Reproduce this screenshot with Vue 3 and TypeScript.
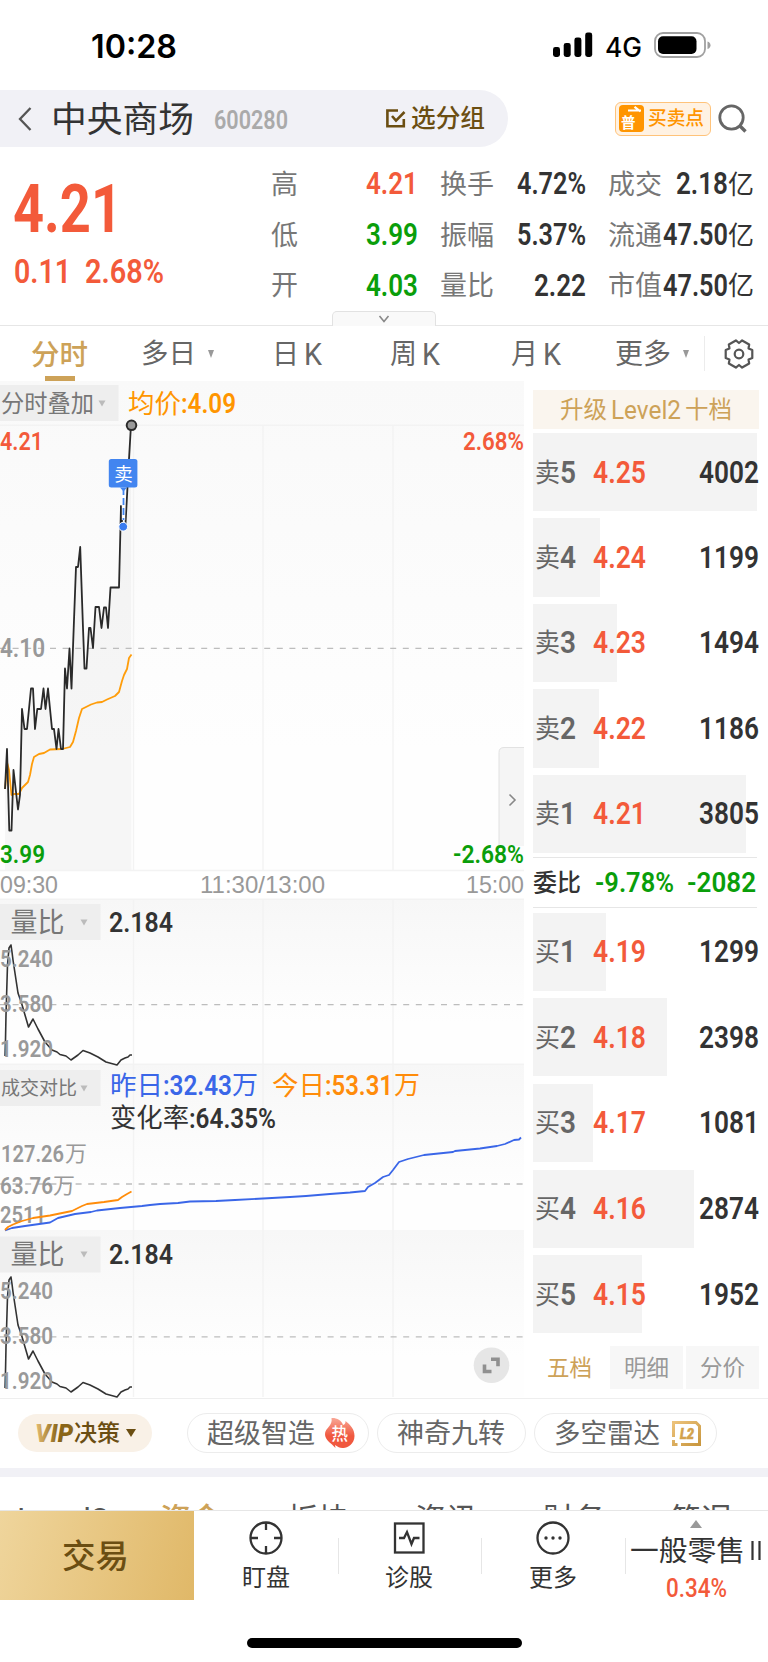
<script setup lang="ts">
import { h } from 'vue'

interface TextProps { t: string; w: number; s: number }

// Single line of text condensed or expanded to an exact advance width.
const T = (p: TextProps) =>
  h('svg', { class: 't', width: p.w, height: Math.round(p.s * 1.2) },
    h('text', {
      x: 0,
      y: Math.round(p.s * 1.2) / 2 + p.s * 0.36,
      'font-size': p.s,
      textLength: p.w,
      lengthAdjust: 'spacingAndGlyphs',
      fill: 'currentColor',
    }, p.t))
T.props = ['t', 'w', 's']

interface Stat { label: string; lw: number; value: string; vw: number; unit?: string; tone: string }
const stats: Stat[][] = [
  [
    { label: '高', lw: 27, value: '4.21', vw: 52, tone: 'red' },
    { label: '换手', lw: 54, value: '4.72%', vw: 69, tone: 'dark' },
    { label: '成交', lw: 54, value: '2.18', vw: 52, unit: '亿', tone: 'dark' },
  ],
  [
    { label: '低', lw: 27, value: '3.99', vw: 52, tone: 'green' },
    { label: '振幅', lw: 54, value: '5.37%', vw: 69, tone: 'dark' },
    { label: '流通', lw: 54, value: '47.50', vw: 65, unit: '亿', tone: 'dark' },
  ],
  [
    { label: '开', lw: 27, value: '4.03', vw: 52, tone: 'green' },
    { label: '量比', lw: 54, value: '2.22', vw: 52, tone: 'dark' },
    { label: '市值', lw: 54, value: '47.50', vw: 65, unit: '亿', tone: 'dark' },
  ],
]

interface Level { side: string; n: string; price: string; qty: string; bar: number }
const sells: Level[] = [
  { side: '卖', n: '5', price: '4.25', qty: '4002', bar: 224 },
  { side: '卖', n: '4', price: '4.24', qty: '1199', bar: 67 },
  { side: '卖', n: '3', price: '4.23', qty: '1494', bar: 84 },
  { side: '卖', n: '2', price: '4.22', qty: '1186', bar: 66 },
  { side: '卖', n: '1', price: '4.21', qty: '3805', bar: 213 },
]
const buys: Level[] = [
  { side: '买', n: '1', price: '4.19', qty: '1299', bar: 73 },
  { side: '买', n: '2', price: '4.18', qty: '2398', bar: 134 },
  { side: '买', n: '3', price: '4.17', qty: '1081', bar: 60 },
  { side: '买', n: '4', price: '4.16', qty: '2874', bar: 161 },
  { side: '买', n: '5', price: '4.15', qty: '1952', bar: 109 },
]

interface Label { t: string; x: number; y: number; w: number; s: number; c: string; b?: number; f?: string }
const labels: Label[] = [
  { t: '4.10', x: 0, y: 647.5, w: 45, s: 26, c: '#999', b: 600 },
  { t: '4.21', x: 0, y: 440.3, w: 43, s: 26.5, c: '#f35a3a', b: 600 },
  { t: '3.99', x: 0, y: 853, w: 45, s: 26.5, c: '#0a9e0a', b: 600 },
  { t: '2.68%', x: 463, y: 440.3, w: 61, s: 26.5, c: '#f35a3a', b: 600 },
  { t: '-2.68%', x: 453, y: 853, w: 71, s: 26.5, c: '#0a9e0a', b: 600 },
  { t: '09:30', x: 0, y: 884.5, w: 58, s: 24, c: '#999', f: 'ax' },
  { t: '11:30/13:00', x: 200, y: 884.5, w: 125, s: 24, c: '#999', f: 'ax' },
  { t: '15:00', x: 466, y: 884.5, w: 58, s: 24, c: '#999', f: 'ax' },
  { t: '分时叠加', x: 1, y: 404, w: 93, s: 23.5, c: '#777' },
  { t: '均价', x: 128, y: 403, w: 53, s: 26.5, c: '#ff9500' },
  { t: ':4.09', x: 181, y: 402.5, w: 55, s: 28, c: '#ff9500', b: 600 },
  { t: '成交对比', x: 1, y: 1088.5, w: 76, s: 19, c: '#777' },
  { t: '昨日', x: 110, y: 1085, w: 53, s: 26.5, c: '#3a66e8' },
  { t: ':32.43', x: 163, y: 1084.5, w: 69, s: 28, c: '#3a66e8', b: 600 },
  { t: '万', x: 232, y: 1085, w: 26, s: 26, c: '#3a66e8' },
  { t: '今日', x: 272, y: 1085, w: 53, s: 26.5, c: '#ff8c0a' },
  { t: ':53.31', x: 325, y: 1084.5, w: 68, s: 28, c: '#ff8c0a', b: 600 },
  { t: '万', x: 394, y: 1085, w: 26, s: 26, c: '#ff8c0a' },
  { t: '变化率', x: 110, y: 1117.5, w: 79, s: 26.5, c: '#333' },
  { t: ':64.35%', x: 189, y: 1117.5, w: 87, s: 28, c: '#333', b: 600 },
  { t: '127.26', x: 1, y: 1153, w: 63, s: 24.5, c: '#999', b: 600 },
  { t: '万', x: 65, y: 1153, w: 22, s: 22, c: '#999' },
  { t: '63.76', x: 0, y: 1185, w: 53, s: 24.5, c: '#999', b: 600 },
  { t: '万', x: 53, y: 1185, w: 22, s: 22, c: '#999' },
  { t: '2511', x: 0, y: 1214.5, w: 46, s: 24.5, c: '#999', b: 600 },
  ...[0, 332].flatMap((d): Label[] => [
    { t: '量比', x: 10.5, y: 922.5 + d, w: 54, s: 27, c: '#777' },
    { t: '2.184', x: 109, y: 921.5 + d, w: 64, s: 28, c: '#333', b: 600 },
    { t: '5.240', x: 0, y: 958.5 + d, w: 53, s: 24.5, c: '#999', b: 600 },
    { t: '3.580', x: 0, y: 1003.5 + d, w: 53, s: 24.5, c: '#999', b: 600 },
    { t: '1.920', x: 0, y: 1048.5 + d, w: 53, s: 24.5, c: '#999', b: 600 },
  ]),
]

const price = '5,789 7,749 9.3,830.5 11.5,830.5 13.5,770 18,809.5 20,795 22,709 24.5,729 27,729 31,688.5 33,688.5 35,729 37.3,709 41,709 43.5,688.5 45.5,709 48,688.5 52,729 54,729 56.5,749 58.5,729 61,749 63,749 65,668.5 67,688.5 69.5,648.5 71.5,688.5 74,620 76,567 78,567 80.2,547 83,628 84.5,668.5 86.5,668.5 89,628 90.5,628 93,648 95.5,607 99,607 101.5,628 104,607.5 106,607.5 108,628 110.5,587.5 119,587.5 121,506 122,524 125.5,524 127.5,487 129,459 131,425'
const average = '5,789 7.5,764 9,770 11.5,795 14,794 19,794 22,788 28,782 30,775 32,764 34,757 39,754 44,753 50,749.5 62,749 70,747 73,742 76,731 79,718 82,709 86,707 91,704.5 97,702.5 102,702 107,699.5 115,696 119,692 122,681 124,675 127,669 129,658 131.5,654.5'
const ratio = '5,1056 5.5,1040 6,1015 7.5,965 9,948 11,945 12,952 13,960 18,993 21.5,1003 28.5,1027 33,1019 38,1029 45,1042 52,1050 57,1052 60,1054.5 66,1056 71,1060 78,1055 83,1050.5 90,1053 98,1057 106,1062 117,1065 121,1060 125,1058 128,1057 130,1055 132,1055'
const yesterday = '5,1230.5 12,1228 25,1226 50,1222.5 58,1218 75,1214 91,1212 97,1210.5 120,1208 142,1206 150,1205 160,1204 178,1203 190,1201.5 216,1201 235,1200 263,1198.5 290,1197 306,1196 330,1194 350,1192.5 365,1191 368,1187 375,1183 383,1177 389,1175 393,1170 399,1162 408,1159 424,1155 453,1152 455,1151 480,1148.5 497,1146 505,1144 514,1140 519,1139.5 521,1137.5'
const today = '5,1230 8,1227 13,1224.5 22,1221 33,1218 50,1215.5 72,1211 82,1206 87,1204 104,1202 118,1200 122,1197 127,1194 131.5,1191.5'
const gridX = [133.5, 263, 393]
const arrows = [[102, 403.5], [84, 922.5], [84, 1088.5], [84, 1254.5]]

// Six-toothed cog outline centred on (15, 15).
const cog = [0, 60, 120, 180, 240, 300]
  .flatMap((a) => [[a - 17, 13.9], [a + 17, 13.9], [a + 30, 11]])
  .map(([a, r]) => `${(15 + r * Math.cos((a * Math.PI) / 180)).toFixed(2)},${(15 + r * Math.sin((a * Math.PI) / 180)).toFixed(2)}`)
  .join(' ')
</script>

<template>
  <div class="page">
    <header class="status">
      <T class="clock" t="10:28" :w="86" :s="33" />
      <svg class="signal" width="40" height="26">
        <rect x="0" y="15" width="7" height="10" rx="2.4" /><rect x="10.7" y="11" width="7" height="14" rx="2.4" />
        <rect x="21.4" y="5.5" width="7" height="19.5" rx="2.4" /><rect x="32.2" y="0.5" width="7" height="24.5" rx="2.4" />
      </svg>
      <T class="net" t="4G" :w="37" :s="26.5" />
      <svg class="battery" width="58" height="26">
        <rect x="1" y="1" width="50" height="24" rx="8" fill="none" stroke="#a0a0a0" stroke-width="1.8" />
        <rect x="4" y="4.3" width="38.5" height="17.6" rx="5" /><path d="M53.5 9.5q3 1 3 3.8t-3 3.8z" fill="#a0a0a0" />
      </svg>
    </header>

    <div class="titlebar">
      <div class="pill">
        <svg class="back" width="14" height="26"><path d="M12.5 2 2 13 12.5 24" fill="none" stroke="#555" stroke-width="2.3" /></svg>
        <T class="name" t="中央商场" :w="143" :s="35.5" />
        <T class="code" t="600280" :w="74" :s="25.5" />
        <svg class="check" width="20" height="19"><path d="M12 1.5H1.4v15.8h16.4V10M6 7l4 4.6L18.5 3" fill="none" stroke="#6b4e12" stroke-width="2.6" /></svg>
        <T class="group" t="选分组" :w="74" :s="24.5" />
      </div>
      <div class="trade-point">
        <svg width="25" height="27">
          <rect width="25" height="27" rx="4" fill="#ff9500" />
          <path d="M9 5.5H22M15.5 1.8 21.5 6.5" stroke="#fff" stroke-width="2.2" fill="none" />
          <text x="2" y="22.6" font-size="14.5" font-weight="700" fill="#fff">普</text>
        </svg>
        <T class="mid" t="买卖点" :w="56" :s="19" />
      </div>
      <svg class="search" width="30" height="30"><circle cx="13.5" cy="13.5" r="11.7" fill="none" stroke="#666" stroke-width="2.8" /><path d="m21.5 21.5 6 6" stroke="#666" stroke-width="3.4" /></svg>
    </div>

    <section class="quote">
      <div class="last">
        <T class="big" t="4.21" :w="109" :s="66" />
        <div class="change"><T t="0.11" :w="57" :s="33" /><T t="2.68%" :w="79" :s="33" /></div>
      </div>
      <div class="stats">
        <div v-for="(row, i) in stats" :key="i" class="stat-row">
          <div v-for="s in row" :key="s.label" class="stat">
            <T class="lab" :t="s.label" :w="s.lw" :s="27" />
            <div class="val" :class="s.tone">
              <T :t="s.value" :w="s.vw" :s="30.5" />
              <T v-if="s.unit" class="unit" :t="s.unit" :w="26" :s="26.5" />
            </div>
          </div>
        </div>
      </div>
      <div class="drawer"><svg width="12" height="8"><path d="m1.5 1 4.5 5.5L10.5 1" fill="none" stroke="#888" stroke-width="1.6" /></svg></div>
    </section>

    <nav class="tabs">
      <div class="tab on"><T t="分时" :w="57" :s="28.5" /></div>
      <div class="tab t2"><T t="多日" :w="55" :s="27.5" /><i class="tri"></i></div>
      <div class="tab t3"><T t="日" :w="27" :s="28" /><T t="K" :w="18" :s="31" /></div>
      <div class="tab t4"><T t="周" :w="27" :s="28" /><T t="K" :w="18" :s="31" /></div>
      <div class="tab t5"><T t="月" :w="27" :s="28" /><T t="K" :w="18" :s="31" /></div>
      <div class="tab t6"><T t="更多" :w="56" :s="28" /><i class="tri"></i></div>
      <div class="gear">
        <svg width="30" height="30" viewBox="0 0 30 30" fill="none" stroke="#555" stroke-width="2.2" stroke-linejoin="round">
          <polygon :points="cog" />
          <circle cx="15" cy="15" r="4.3" />
        </svg>
      </div>
    </nav>

    <main class="main">
      <svg class="chart" width="524" height="1017" viewBox="0 381 524 1017">
        <defs>
          <linearGradient id="fade" x1="0" y1="0" x2="0" y2="1"><stop offset="0" stop-color="#f7f7f7" /><stop offset="0.75" stop-color="#fefefe" /></linearGradient>
          <linearGradient id="fade2" x1="0" y1="0" x2="0" y2="1"><stop offset="0" stop-color="#f9f9f9" /><stop offset="0.75" stop-color="#fefefe" /></linearGradient>
        </defs>
        <rect x="0" y="381" width="524" height="489" fill="url(#fade2)" />
        <rect x="0" y="899" width="524" height="165" fill="url(#fade)" />
        <rect x="0" y="1064" width="524" height="166" fill="url(#fade)" />
        <rect x="0" y="1230" width="524" height="167" fill="url(#fade)" />
        <polygon :points="`5,870 ${price} 131.5,870`" fill="#000" fill-opacity="0.03" />
        <g stroke="#f3f3f3" stroke-width="1.4">
          <path d="M0 425.3H524M0 870.5H524M0 899.3H524M0 1064.3H524" />
          <path v-for="x in gridX" :key="x" :d="`M${x} 425V870M${x} 899V1397`" />
        </g>
        <g stroke="#bdbdbd" stroke-width="1.3" stroke-dasharray="6 6.6">
          <path d="M50 648.3H524" /><path d="M0 648.3H50" />
          <path d="M0 1004.6H524M0 1184H524M0 1336.8H524" />
        </g>
        <g fill="#eee">
          <rect x="0" y="385" width="118.5" height="36" /><rect x="0" y="904" width="100.5" height="36" />
          <rect x="0" y="1070" width="100.5" height="36" /><rect x="0" y="1236.5" width="100.5" height="36" />
        </g>
        <path v-for="a in arrows" :key="a[1]" :d="`M${a[0] - 3.5} ${a[1] - 3}h7l-3.5 6z`" fill="#bbb" />
        <path d="M524 747.5H504q-5 0-5 5V846h25z" fill="#f5f5f5" />
        <path d="M524 747.5H504q-5 0-5 5V846" fill="none" stroke="#e2e2e2" />
        <path d="m509.5 794.5 5.5 5.5-5.5 5.5" fill="none" stroke="#888" stroke-width="1.6" />
        <g fill="none" stroke-linejoin="round">
          <polyline :points="average" stroke="#ff9d0a" stroke-width="1.8" />
          <polyline :points="price" stroke="#2a2a2a" stroke-width="1.8" />
          <polyline :points="ratio" stroke="#333" stroke-width="1.6" />
          <polyline :points="ratio" stroke="#333" stroke-width="1.6" transform="translate(0 332)" />
        </g>
        <text v-for="(l, i) in labels" :key="i" :class="l.f" :x="l.x" :y="l.y + l.s * 0.36" :font-size="l.s" :font-weight="l.b || 400" :fill="l.c" :textLength="l.w" lengthAdjust="spacingAndGlyphs">{{ l.t }}</text>
        <g fill="none" stroke-linejoin="round" stroke-width="1.8">
          <polyline :points="yesterday" stroke="#3a66e8" />
          <polyline :points="today" stroke="#ff8c0a" />
        </g>
        <circle cx="131.5" cy="425.3" r="4.8" fill="#999" stroke="#2a2a2a" stroke-width="2" />
        <path d="M121.3 506V523" stroke="#222" stroke-width="2.2" />
        <path d="M123.5 488V520" stroke="#fff" stroke-width="3.4" />
        <path d="M123.5 488V520" stroke="#4285f0" stroke-width="1.8" stroke-dasharray="7 3" />
        <rect x="108.8" y="459" width="28.6" height="28.6" rx="2.5" fill="#4285f0" /><path d="M120 487.5h7l-3.5 4z" fill="#4285f0" />
        <text x="114.3" y="480.7" font-size="18.5" fill="#fff">卖</text>
        <circle cx="123.2" cy="526.7" r="4.4" fill="#3a7cf0" stroke="#fff" />
        <circle cx="491.5" cy="1365.3" r="17.8" fill="#e6e6e6" />
        <path d="M491 1359.2h7v7M491.5 1371.5h-7v-7" fill="none" stroke="#909090" stroke-width="3.6" />
      </svg>

      <aside class="book">
        <div class="banner"><T t="升级" :w="47" :s="23.5" /><T t="Level2" :w="70" :s="25" /><T t="十档" :w="47" :s="23.5" /></div>
        <div class="levels">
          <div v-for="l in sells" :key="l.n" class="level">
            <div class="bar" :style="{ width: l.bar + 'px' }"></div>
            <T class="side" :t="l.side" :w="25" :s="26" /><T class="num" :t="l.n" :w="16" :s="30.5" />
            <T class="price" :t="l.price" :w="53" :s="30.5" /><T class="qty" :t="l.qty" :w="60" :s="30.5" />
          </div>
        </div>
        <div class="ratio"><T class="rl" t="委比" :w="48" :s="24" /><T class="rg a" t="-9.78%" :w="79" :s="28" /><T class="rg b" t="-2082" :w="69" :s="28" /></div>
        <div class="levels lower">
          <div v-for="l in buys" :key="l.n" class="level">
            <div class="bar" :style="{ width: l.bar + 'px' }"></div>
            <T class="side" :t="l.side" :w="25" :s="26" /><T class="num" :t="l.n" :w="16" :s="30.5" />
            <T class="price" :t="l.price" :w="53" :s="30.5" /><T class="qty" :t="l.qty" :w="60" :s="30.5" />
          </div>
        </div>
        <div class="modes">
          <div class="mode active"><T t="五档" :w="45" :s="22.5" /></div>
          <div class="mode"><T t="明细" :w="45" :s="22.5" /></div>
          <div class="mode"><T t="分价" :w="45" :s="22.5" /></div>
        </div>
      </aside>
    </main>

    <div class="tools">
      <div class="vip">
        <svg width="39" height="24">
          <defs><linearGradient id="vip"><stop offset="0" stop-color="#e8bf74" /><stop offset="0.6" stop-color="#8a6518" /><stop offset="1" stop-color="#8a6518" /></linearGradient></defs>
          <text x="0" y="21" font-size="25.5" font-weight="900" font-style="italic" fill="url(#vip)" textLength="38" lengthAdjust="spacingAndGlyphs">VIP</text>
        </svg>
        <T class="mid" t="决策" :w="46" :s="23" /><i class="vtri"></i>
      </div>
      <div class="tool p1"><T t="超级智造" :w="108" :s="27" />
        <svg class="hot" width="32" height="32" viewBox="0 0 32 32">
          <defs><linearGradient id="hot" x1="0" y1="0" x2="0" y2="1"><stop offset="0" stop-color="#f9a796" /><stop offset="0.6" stop-color="#f0583f" /></linearGradient></defs>
          <path d="M7.5 1c5-.3 10 2 11.5 7 2-.5 2.500-2 2.500-4 5 4 9 8 9 15 0 8-7 12-11 12-4 .3-5-1-8.500-3l.5 3-4-4C3 24 1 20 1 17c0-6 8-8 6.500-16z" fill="url(#hot)" />
          <text x="7.500" y="23" font-size="16.500" font-weight="500" fill="#fff">热</text>
        </svg>
      </div>
      <div class="tool p2"><T t="神奇九转" :w="108" :s="27" /></div>
      <div class="tool p3"><T t="多空雷达" :w="106" :s="27" />
        <svg class="l2" width="29" height="25">
          <defs><linearGradient id="gold" x1="0" y1="0" x2="1" y2="1"><stop offset="0" stop-color="#ecc27a" /><stop offset="1" stop-color="#c9973f" /></linearGradient></defs>
          <path d="M1.500 16V1.500H24L27.500 5V23.500H9M1.500 19v4.500h4" fill="none" stroke="url(#gold)" stroke-width="3" />
          <text x="8" y="17.800" font-size="14.500" font-weight="900" font-style="italic" fill="#d3a24c" stroke="#d3a24c" stroke-width="0.500" textLength="14" lengthAdjust="spacingAndGlyphs">L2</text>
        </svg>
      </div>
    </div>
    <div class="band"></div>
    <nav class="subtabs">
      <T t="Level2" :w="92" :s="31" /><T class="gold" t="资金" :w="62" :s="31" /><T t="板块" :w="62" :s="31" />
      <T t="资讯" :w="62" :s="31" /><T t="财务" :w="62" :s="31" /><T t="简况" :w="62" :s="31" />
    </nav>

    <footer class="dock">
      <div class="deal"><T t="交易" :w="67" :s="33.500" /></div>
      <div class="item"><svg width="34" height="34" fill="none" stroke="#333" stroke-width="2.300"><circle cx="17" cy="17" r="15.500" /><path d="M17 2v7M17 25v7M2 17h7M25 17h7" /></svg><T t="盯盘" :w="48" :s="24" /></div>
      <div class="item line"><svg width="34" height="34" fill="none" stroke="#333" stroke-width="2.300"><rect x="3" y="2.500" width="28.500" height="29" /><path d="M7 17h5l3-6 4.500 12 2.500-6h5.500" /></svg><T t="诊股" :w="48" :s="24" /></div>
      <div class="item line"><svg width="34" height="34" fill="none" stroke="#333" stroke-width="2.300"><circle cx="17" cy="17" r="15.500" /><g fill="#333" stroke="none"><circle cx="10" cy="17" r="1.700" /><circle cx="17" cy="17" r="1.700" /><circle cx="24" cy="17" r="1.700" /></g></svg><T t="更多" :w="48" :s="24" /></div>
      <div class="sector line"><i class="up"></i>
        <div class="sector-name"><T t="一般零售" :w="115" :s="28.500" /><svg width="14" height="30"><path d="M3.500 5V24M10.500 5V24" stroke="#333" stroke-width="2.200" /></svg></div>
        <T class="red" t="0.34%" :w="61" :s="25" />
      </div>
    </footer>
    <div class="home"><i></i></div>
  </div>
</template>

<style>
body { background: #fff; }
</style>

<style scoped>
.page { width: 768px; height: 1662px; overflow: hidden; background: #fff; font-family: Roboto, "Noto Sans CJK SC", sans-serif; color: #333; }
.t { display: block; flex: none; overflow: visible; }
svg { display: block; flex: none; }
.mid { font-weight: 500; }
.status { height: 90px; display: flex; align-items: center; box-sizing: border-box; padding-left: 91px; }
.clock { font-family: Inter, sans-serif; font-weight: 600; color: #000; margin-top: 2px; }
.signal { margin-left: 376px; }
.net { margin-left: 12px; font-family: Inter, sans-serif; font-weight: 500; color: #000; margin-top: 4px; }
.battery { margin-left: 12px; }
.titlebar { height: 57px; display: flex; align-items: center; }
.pill { width: 507.5px; height: 57px; background: #f1f1f6; border-radius: 0 29px 29px 0; display: flex; align-items: center; }
.back { margin-left: 18px; }
.name { margin-left: 19px; margin-top: 1px; }
.code { margin-left: 20px; margin-top: 1px; color: #aaa; font-weight: 600; }
.check { margin-left: 98px; }
.group { margin-left: 5px; color: #6b4e12; font-weight: 500; }
.trade-point { margin-left: 107.5px; width: 95.5px; height: 34px; box-sizing: border-box; border: 1.5px solid #ffc37a; border-radius: 6px; background: #fff2e3; display: flex; align-items: center; gap: 4px; padding-left: 2.5px; color: #ff9500; }
.search { margin-left: 7px; }
.quote { height: 179px; display: grid; grid-template-columns: 271px 485px; align-content: start; border-bottom: 1.5px solid #e6e6e6; box-sizing: border-box; }
.last { color: #f35a3a; padding-left: 13px; padding-top: 22px; font-weight: 600; }
.change { display: flex; gap: 14px; margin: 3px 0 0 1px; }
.big { font-weight: 700; }
.stats { padding-top: 11.5px; height: 152.5px; }
.stat-row { height: 50.7px; display: grid; grid-template-columns: 147px 146px 146px; column-gap: 22px; }
.stat { display: flex; align-items: center; justify-content: space-between; }
.lab { color: #777; }
.val { display: flex; align-items: center; font-weight: 600; }
.unit { font-weight: 400; }
.red { color: #f35a3a; }
.green { color: #0a9e0a; }
.dark { color: #333; }
.drawer { grid-column: 1 / -1; margin-left: 332px; width: 104px; height: 15px; box-sizing: border-box; border: 1.5px solid #e2e2e2; border-bottom: 0; border-radius: 5px 5px 0 0; background: #f9f9f9; display: flex; justify-content: center; align-items: center; }
.tabs { height: 55px; display: flex; align-items: center; color: #666; }
.tab { display: flex; align-items: center; }
.tab.on { color: #cda258; margin-left: 31px; height: 55px; flex-direction: column; justify-content: flex-end; gap: 4px; }
.tab.on .t { font-weight: 500; }
.tab.on::after { content: ""; width: 30px; height: 5px; background: #cda258; }
.t2 { margin-left: 53px; }
.tri { border: 3.5px solid transparent; border-top: 8px solid #999; border-bottom: 0; margin-left: 12px; }
.t3 { margin-left: 58px; }
.t3, .t4, .t5 { gap: 5px; }
.t4 { margin-left: 68px; }
.t5 { margin-left: 71px; }
.t6 { margin-left: 54px; }
.gear { margin-left: 15px; height: 35px; border-left: 1.5px solid #ececec; padding-left: 19px; display: flex; align-items: center; }
.main { display: flex; height: 1017px; }
.ax { font-family: "Liberation Sans", Arial, sans-serif; }
.book { width: 226px; margin-left: 9px; padding-top: 9px; }
.banner { height: 39px; background: #faf5ee; color: #cda258; display: flex; align-items: center; justify-content: center; gap: 4px; }
.levels { margin-top: 4px; height: 420px; display: flex; flex-direction: column; justify-content: space-between; }
.levels.lower { margin-top: 5px; height: 421px; }
.level { height: 78.300px; position: relative; display: flex; align-items: center; }
.bar { position: absolute; left: 0; top: 0; height: 100%; background: #f3f3f3; }
.side, .num, .price, .qty { position: relative; }
.side { margin-left: 2px; color: #666; }
.num { font-weight: 600; color: #666; }
.price { margin-left: 17px; font-weight: 600; color: #f35a3a; }
.qty { margin-left: 53px; font-weight: 600; color: #333; }
.ratio { width: 224px; height: 50.500px; box-sizing: border-box; margin-top: 4px; border-top: 1.500px solid #e6e6e6; border-bottom: 1.500px solid #e6e6e6; display: flex; align-items: center; }
.rl { font-weight: 500; }
.rg { color: #0a9e0a; font-weight: 600; }
.rg.a { margin-left: 14px; }
.rg.b { margin-left: 13px; }
.modes { margin-top: 12px; height: 43px; display: grid; grid-template-columns: 73px 73px 73px; gap: 3.500px; color: #999; }
.mode { display: flex; align-items: center; justify-content: center; background: #f7f7f7; }
.mode.active { background: #fff; color: #cda258; }
.tools { height: 70px; box-sizing: border-box; border-top: 1.500px solid #eee; display: flex; align-items: center; padding-bottom: 1px; color: #666; }
.vip { margin-left: 18px; width: 134px; height: 38px; box-sizing: border-box; padding-left: 17px; border-radius: 19px; background: #f9f1e7; display: flex; align-items: center; color: #6b4e12; }
.vtri { border: 5px solid transparent; border-top: 8px solid #6b4e12; border-bottom: 0; margin-left: 6px; }
.tool { height: 40px; box-sizing: border-box; border: 1.500px solid #ececec; border-radius: 20px; display: flex; align-items: center; padding-left: 19px; }
.p1 { margin-left: 34.500px; width: 182.500px; }
.hot { margin-left: 9px; }
.p2 { margin-left: 8px; width: 149px; }
.p3 { margin-left: 7.500px; width: 183px; }
.l2 { margin-left: 12px; }
.band { height: 9px; background: #f1f1f6; }
.subtabs { height: 34px; overflow: hidden; box-sizing: border-box; padding: 23px 0 0 17px; display: grid; grid-template-columns: 143px 127px 127.500px 128px 127.500px 100px; color: #555; }
.gold { color: #cda258; font-weight: 500; }
.dock { height: 89px; display: flex; box-shadow: 0 -1px 0 #e6e6e6; position: relative; }
.deal { width: 194px; background: linear-gradient(105deg, #efd59c, #e0b868); display: flex; align-items: center; justify-content: center; color: #6b4e12; font-weight: 500; padding-right: 4px; box-sizing: border-box; }
.item { width: 143.500px; display: flex; flex-direction: column; align-items: center; padding-top: 10px; gap: 8px; box-sizing: border-box; }
.line { background: linear-gradient(#e6e6e6, #e6e6e6) 0 27px / 1px 36px no-repeat; }
.sector { width: 143.500px; display: flex; flex-direction: column; align-items: center; padding-top: 9px; box-sizing: border-box; }
.up { border: 6px solid transparent; border-bottom: 8px solid #999; border-top: 0; }
.sector-name { display: flex; align-items: center; margin-top: 6px; gap: 4px; }
.sector > .red { margin-top: 5px; font-weight: 500; }
.home { height: 62px; display: flex; justify-content: center; align-items: flex-end; }
.home i { width: 275px; height: 9.500px; border-radius: 5px; background: #000; margin-bottom: 14.500px; }
</style>
